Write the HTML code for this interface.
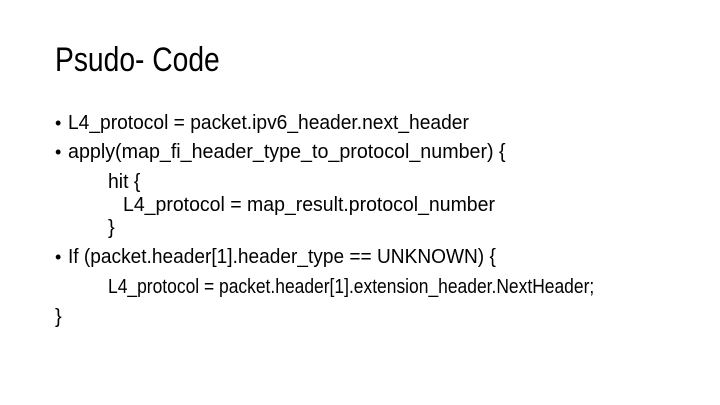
<!DOCTYPE html>
<html><head><style>
html,body{margin:0;padding:0;background:#fff;}
body{width:720px;height:405px;position:relative;overflow:hidden;font-family:"Liberation Sans",sans-serif;color:#000;}
.l{position:absolute;white-space:nowrap;font-size:20px;line-height:24px;transform-origin:left center;}
.t{position:absolute;left:55px;top:39px;font-size:34px;line-height:42px;white-space:nowrap;transform:scaleX(0.83);transform-origin:left center;}
.b{position:absolute;font-size:18px;line-height:24px;}
</style></head><body>
<div class="t">Psudo- Code</div>
<div class="b" style="left:55px;top:111px">•</div>
<div class="l" style="left:68px;top:111px;transform:scaleX(0.96)">L4_protocol = packet.ipv6_header.next_header</div>
<div class="b" style="left:55px;top:140px">•</div>
<div class="l" style="left:68px;top:140px;transform:scaleX(0.984)">apply(map_fi_header_type_to_protocol_number) {</div>
<div class="l" style="left:108px;top:170px;transform:scaleX(0.97)">hit {</div>
<div class="l" style="left:123px;top:193px;transform:scaleX(0.974)">L4_protocol = map_result.protocol_number</div>
<div class="l" style="left:108px;top:216px">}</div>
<div class="b" style="left:55px;top:245px">•</div>
<div class="l" style="left:68px;top:245px;transform:scaleX(0.955)">If (packet.header[1].header_type == UNKNOWN) {</div>
<div class="l" style="left:108px;top:275px;transform:scaleX(0.872)">L4_protocol = packet.header[1].extension_header.NextHeader;</div>
<div class="l" style="left:55px;top:305px">}</div>
</body></html>
